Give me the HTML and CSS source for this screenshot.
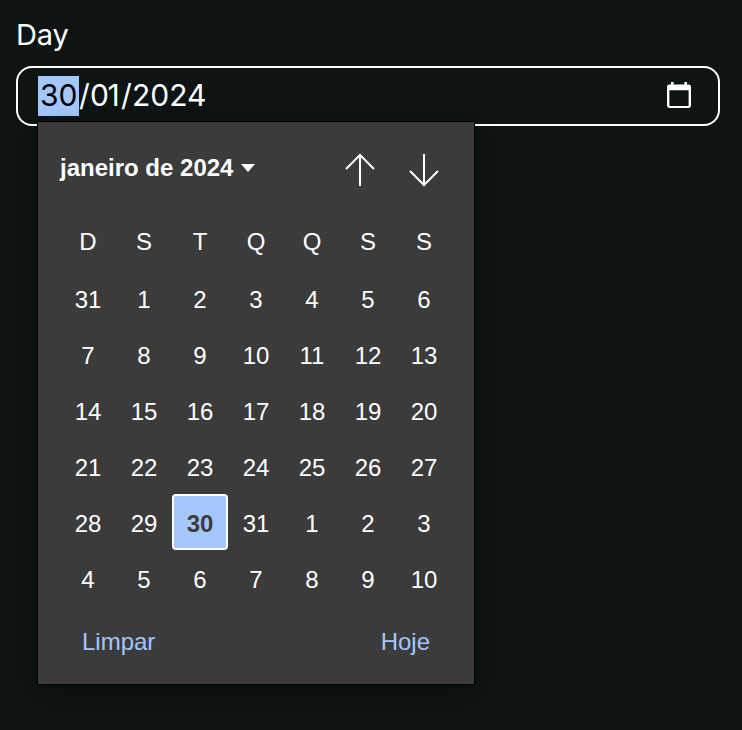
FILE: index.html
```html
<!DOCTYPE html>
<html lang="pt">
<head>
<meta charset="utf-8">
<title>Day</title>
<link rel="stylesheet" href="styles.css">
</head>
<body>
<div class="field">
  <div class="label">Day</div>
  <div class="input">
    <div class="date"><span class="selected-part">30</span><span class="sep">/</span><span class="month">01</span><span class="sep">/</span><span class="year">2024</span></div>
    <svg class="calendar-icon" width="24" height="27" viewBox="0 0 24 27"><path fill="#fff" fill-rule="evenodd" d="M4 0h2.600v2.600h10.800V0H20v2.600h1.600A2.400 2.400 0 0 1 24 5v18.600a2.400 2.400 0 0 1-2.400 2.400H2.400A2.400 2.400 0 0 1 0 23.600V5a2.400 2.400 0 0 1 2.400-2.400H4zM2.400 8.300v15.600h19.200V8.300z"/></svg>
    <div class="popup">
      <div class="head">
        <div class="title">janeiro de 2024</div>
        <svg class="caret" width="14" height="8" viewBox="0 0 14 8"><path fill="#fff" d="M0 0h14L7 8z"/></svg>
        <div class="arrows">
          <svg width="32" height="34" viewBox="0 0 32 34"><path d="M16 33V2M2 16 16 2l14 14"/></svg>
          <svg width="32" height="34" viewBox="0 0 32 34"><path d="M16 1v31M2 18l14 14 14-14"/></svg>
        </div>
      </div>
      <div class="grid weekdays"><span>D</span><span>S</span><span>T</span><span>Q</span><span>Q</span><span>S</span><span>S</span></div>
      <div class="grid days">
        <span>31</span><span>1</span><span>2</span><span>3</span><span>4</span><span>5</span><span>6</span>
        <span>7</span><span>8</span><span>9</span><span>10</span><span>11</span><span>12</span><span>13</span>
        <span>14</span><span>15</span><span>16</span><span>17</span><span>18</span><span>19</span><span>20</span>
        <span>21</span><span>22</span><span>23</span><span>24</span><span>25</span><span>26</span><span>27</span>
        <span>28</span><span>29</span><span class="current">30</span><span>31</span><span>1</span><span>2</span><span>3</span>
        <span>4</span><span>5</span><span>6</span><span>7</span><span>8</span><span>9</span><span>10</span>
      </div>
      <div class="foot"><span>Limpar</span><span>Hoje</span></div>
    </div>
  </div>
</div>
</body>
</html>
```
FILE: styles.css
```css
* { box-sizing: border-box; }
body { margin: 0; height: 730px; overflow: hidden; background: #0d1413; color: #fff; }
.field { padding: 16px 22px 0 16px; }
.label { height: 50px; font: 400 29px/38px Inter, sans-serif; letter-spacing: -0.2px; }
.input {
  position: relative; display: flex; align-items: flex-start; justify-content: space-between;
  height: 60px; padding: 8px 27px 0 20px; border: 2px solid #fff; border-radius: 16px;
}
.date { display: flex; height: 40px; font: 400 30px/38px Inter, sans-serif; }
.selected-part { width: 41px; padding-left: 2px; background: #a4c7fd; color: #000; }
.sep { width: 11px; }
.month { width: 31px; letter-spacing: -1.5px; }
.calendar-icon { margin-top: 6px; }
.popup {
  position: absolute; left: 20px; top: 54px; width: 436px; height: 562px;
  background: #3b3b3b; box-shadow: 0 0 0 1px #000, 0 6px 20px rgba(0,0,0,.3);
  font: 24px/28px "Liberation Sans", Arial, sans-serif;
}
.head { display: flex; align-items: center; height: 92px; padding: 0 34px 0 22px; }
.title { font-weight: 700; white-space: nowrap; }
.caret { margin-left: 8px; }
.arrows { display: flex; gap: 32px; margin: 4px 0 0 auto; }
.arrows path { fill: none; stroke: #fff; stroke-width: 2; }
.grid { display: grid; grid-template-columns: repeat(7, 56px); margin-left: 22px; text-align: center; }
.grid span { display: flex; align-items: center; justify-content: center; }
.weekdays { height: 56px; }
.days { grid-auto-rows: 56px; }
.days span { padding-top: 4px; }
.grid .current { border: 2px solid #fff; border-radius: 4px; background: #a4c7fd; color: #3b3b3b; font-weight: 700; }
.foot { display: flex; justify-content: space-between; padding: 22px 44px 0; color: #a4c7fd; }
```
